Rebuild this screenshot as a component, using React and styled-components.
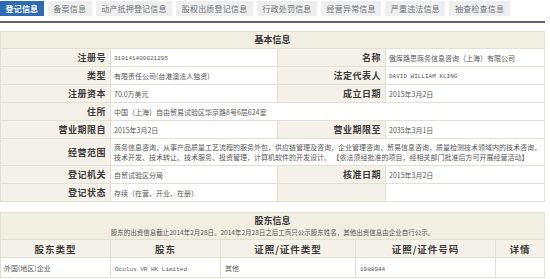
import styled, { createGlobalStyle } from 'styled-components'

const GlobalStyle = createGlobalStyle`
    body {
        margin: 0;
        background: #fff;
        font-family: "Noto Sans CJK SC", "Liberation Sans", sans-serif;
    }
`
const Page = styled.div`
    width: 545px;
    padding-top: 1px;
`
const TabBar = styled.div`
    display: flex;
    gap: 4px;
    padding-bottom: 5px;
    border-bottom: 2px solid #5f6366;
`
const Tab = styled.div`
    height: 15px;
    line-height: 15px;
    padding: 0 5.5px;
    font-size: 8px;
    letter-spacing: 0.2px;
    background: ${p => (p.$active ? '#2d6bb3' : '#eeeeee')};
    color: ${p => (p.$active ? '#fff' : '#6d7278')};
    font-weight: ${p => (p.$active ? 700 : 400)};
`
const Table = styled.table`
    width: 545px;
    border-collapse: collapse;
    table-layout: fixed;
    margin-top: ${p => p.$gap || 0}px;
    td, th {
        border: 1px solid #e2dfd3;
        padding: 0;
    }
`
const Caption = styled.th`
    background: #f1eee2;
    height: ${p => p.$h || 16}px;
    font-size: 9px;
    font-weight: 700;
    color: #333;
    text-align: center;
    line-height: 12px;
`
const Sub = styled.div`
    margin-top: 1px;
    font-size: 6.5px;
    font-weight: 400;
    color: #555;
    line-height: 9px;
`
const Label = styled.td`
    background: #f4f2e8;
    height: ${p => p.$h || 17}px;
    text-align: right;
    padding-right: 4px !important;
    font-size: 9px;
    font-weight: 700;
    letter-spacing: 0.5px;
    color: #3a3a3a;
`
const Value = styled.td`
    background: #fff;
    padding: 0 3px !important;
    font-size: 7px;
    color: #555;
    line-height: 10px;
`
const Latin = styled.span`
    font-family: "Liberation Mono", monospace;
    font-size: 6px;
`
const ColHead = styled.th`
    background: #f4f2e8;
    height: 17px;
    font-size: 9.5px;
    font-weight: 700;
    letter-spacing: 1px;
    color: #3a3a3a;
`
const Cell = styled.td`
    height: 19px;
    padding: 0 ${p => p.$pad || 3}px !important;
    font-size: 7px;
    color: #555;
`

const tabs = ['登记信息', '备案信息', '动产抵押登记信息', '股权出质登记信息', '行政处罚信息', '经营异常信息', '严重违法信息', '抽查检查信息']

export default function App() {
    return (
        <Page>
            <GlobalStyle />
            <TabBar>
                {tabs.map((t, i) => (
                    <Tab key={t} $active={i === 0}>{t}</Tab>
                ))}
            </TabBar>
            <Table $gap={8}>
                <colgroup>
                    <col style={{ width: 110 }} />
                    <col style={{ width: 167 }} />
                    <col style={{ width: 108 }} />
                    <col />
                </colgroup>
                <tbody>
                    <tr><Caption colSpan={4}>基本信息</Caption></tr>
                    <tr>
                        <Label>注册号</Label>
                        <Value><Latin>310141400021295</Latin></Value>
                        <Label>名称</Label>
                        <Value>傲库路思商务信息咨询（上海）有限公司</Value>
                    </tr>
                    <tr>
                        <Label>类型</Label>
                        <Value>有限责任公司(台港澳法人独资)</Value>
                        <Label>法定代表人</Label>
                        <Value><Latin>DAVID WILLIAM KLING</Latin></Value>
                    </tr>
                    <tr>
                        <Label>注册资本</Label>
                        <Value>70.0万美元</Value>
                        <Label>成立日期</Label>
                        <Value>2015年3月2日</Value>
                    </tr>
                    <tr>
                        <Label>住所</Label>
                        <Value colSpan={3}>中国（上海）自由贸易试验区华京路8号6层624室</Value>
                    </tr>
                    <tr>
                        <Label>营业期限自</Label>
                        <Value>2015年3月2日</Value>
                        <Label>营业期限至</Label>
                        <Value>2035年3月1日</Value>
                    </tr>
                    <tr>
                        <Label $h={26}>经营范围</Label>
                        <Value colSpan={3}>
                            商务信息咨询，从事产品质量工艺流程的服务外包，供应链管理及咨询，企业管理咨询，贸易信息咨询，质量检测技术领域内的技术咨询，技术开发、技术转让、技术服务、投资管理，计算机软件的开发设计。 【依法须经批准的项目，经相关部门批准后方可开展经营活动】
                        </Value>
                    </tr>
                    <tr>
                        <Label>登记机关</Label>
                        <Value>自贸试验区分局</Value>
                        <Label>核准日期</Label>
                        <Value>2015年3月2日</Value>
                    </tr>
                    <tr>
                        <Label>登记状态</Label>
                        <Value>存续（在营、开业、在册）</Value>
                        <Label />
                        <Value />
                    </tr>
                </tbody>
            </Table>
            <Table $gap={10}>
                <colgroup>
                    <col style={{ width: 110 }} />
                    <col style={{ width: 110 }} />
                    <col style={{ width: 135 }} />
                    <col style={{ width: 140 }} />
                    <col />
                </colgroup>
                <tbody>
                    <tr>
                        <Caption colSpan={5} $h={26}>
                            股东信息
                            <Sub>股东的出资信息截止2014年2月28日。2014年2月28日之后工商只公示股东姓名，其他出资信息由企业自行公示。</Sub>
                        </Caption>
                    </tr>
                    <tr>
                        <ColHead>股东类型</ColHead>
                        <ColHead>股东</ColHead>
                        <ColHead>证照/证件类型</ColHead>
                        <ColHead>证照/证件号码</ColHead>
                        <ColHead>详情</ColHead>
                    </tr>
                    <tr>
                        <Cell>外国(地区)企业</Cell>
                        <Cell $pad={4}><Latin>Oculus VR HK Limited</Latin></Cell>
                        <Cell $pad={4}>其他</Cell>
                        <Cell $pad={4}><Latin>1988944</Latin></Cell>
                        <Cell />
                    </tr>
                </tbody>
            </Table>
        </Page>
    )
}
